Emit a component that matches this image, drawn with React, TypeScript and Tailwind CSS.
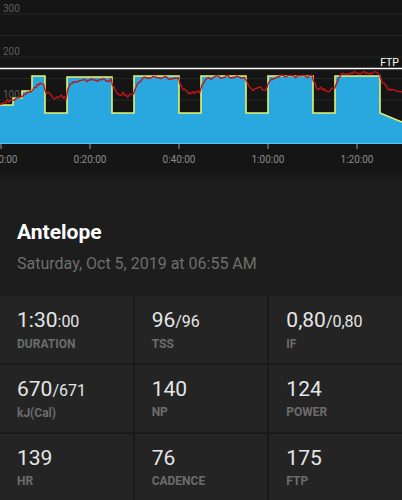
import React from 'react'

// workout steps in chart pixel space: [x0, x1, y0, y1]
const steps: [number, number, number, number][] = [
  [0, 13, 105, 105],
  [13, 22, 98, 98],
  [22, 32, 91, 91],
  [32, 45, 76, 76],
  [45, 67, 113, 113],
  [67, 112, 77, 77],
  [112, 134, 113, 113],
  [134, 179, 76, 76],
  [179, 201, 113, 113],
  [201, 246, 76, 76],
  [246, 268, 113, 113],
  [268, 313, 76, 76],
  [313, 335, 113, 113],
  [335, 380, 76, 76],
  [380, 402, 113, 122],
]

// where the rider actually sat (roughly) in each step
const redTargets = [101, 97, 92, 84, 97, 80, 95, 78, 93, 77, 89, 76, 90, 73, 90]

const BOTTOM = 143.5

const hash = (n: number) => {
  const s = Math.sin(n * 127.1 + 311.7) * 43758.5453
  return s - Math.floor(s) - 0.5
}

function buildWorkout() {
  const pts: string[] = []
  steps.forEach(([x0, x1, y0, y1]) => {
    pts.push(`${x0},${y0}`)
    pts.push(`${x1},${y1}`)
  })
  return pts.join(' ')
}

function buildPower() {
  const pts: string[] = []
  let r = 104
  for (let x = 0; x <= 402; x += 1.5) {
    const idx = steps.findIndex(([x0, x1]) => x >= x0 && x < x1)
    const i = idx === -1 ? steps.length - 1 : idx
    const target = redTargets[i]
    const low = steps[i][2] > 100
    r += 0.35 * (target - r)
    const y = r + hash(x) * (low ? 3.6 : 2.2) + Math.sin(x * 0.6) * 0.8
    pts.push(`${x},${y.toFixed(1)}`)
  }
  return pts.join(' ')
}

function WorkoutChart() {
  const outline = buildWorkout()
  const area = `0,${BOTTOM} ${outline} 402,${BOTTOM}`
  const power = buildPower()
  const ticks = [
    { x: 1, label: '0:00:00' },
    { x: 90, label: '0:20:00' },
    { x: 179, label: '0:40:00' },
    { x: 268, label: '1:00:00' },
    { x: 357, label: '1:20:00' },
  ]

  return (
    <svg width="402" height="176" viewBox="0 0 402 176" className="block">
      {[14, 35.5, 57, 78.5, 100, 121.5].map((y) => (
        <line key={y} x1="0" x2="402" y1={y} y2={y} stroke="#272727" strokeWidth="1" />
      ))}
      <polygon points={area} fill="#29a8df" />
      <line x1="0" x2="402" y1={BOTTOM} y2={BOTTOM} stroke="#5ec4ef" strokeWidth="1" />
      <polyline points={outline} fill="none" stroke="#e3f36c" strokeWidth="1.6" strokeLinejoin="miter" />
      <polyline points={power} fill="none" stroke="#c0141b" strokeWidth="1.4" strokeLinejoin="round" />
      <line x1="0" x2="402" y1="68.5" y2="68.5" stroke="#ffffff" strokeWidth="1.6" />
      <text x="399" y="65.5" textAnchor="end" fill="#ffffff" fontSize="10.5" fontFamily="Roboto, sans-serif">
        FTP
      </text>
      {[
        { y: 11.5, t: '300' },
        { y: 54.5, t: '200' },
        { y: 97.5, t: '100' },
      ].map((l) => (
        <text key={l.t} x="3" y={l.y} fill="#5e5e5e" fontSize="10" fontFamily="Roboto, sans-serif">
          {l.t}
        </text>
      ))}
      {ticks.map((t) => (
        <g key={t.label}>
          <line x1={t.x} x2={t.x} y1="144" y2="149" stroke="#9a9a9a" strokeWidth="1" />
          <text x={t.x} y="163" textAnchor="middle" fill="#8a8a8a" fontSize="10" fontFamily="Roboto, sans-serif">
            {t.label}
          </text>
        </g>
      ))}
    </svg>
  )
}

interface Stat {
  value: string
  suffix?: string
  label: string
}

const stats: Stat[] = [
  { value: '1:30', suffix: ':00', label: 'DURATION' },
  { value: '96', suffix: '/96', label: 'TSS' },
  { value: '0,80', suffix: '/0,80', label: 'IF' },
  { value: '670', suffix: '/671', label: 'kJ(Cal)' },
  { value: '140', label: 'NP' },
  { value: '124', label: 'POWER' },
  { value: '139', label: 'HR' },
  { value: '76', label: 'CADENCE' },
  { value: '175', label: 'FTP' },
]

export default function App() {
  return (
    <div className="w-[402px] h-[500px] overflow-hidden bg-[#1d1d1d] font-['Roboto',sans-serif]">
      {/* Power chart */}
      <div className="h-[172px] bg-[#151515] overflow-hidden">
        <WorkoutChart />
      </div>
      <div className="h-[10px] bg-gradient-to-b from-[#161616] to-[#1d1d1d]" />

      {/* Title */}
      <div className="px-[17px] pt-[40px] pb-[24px]">
        <h1 className="text-[21px] leading-[21px] font-bold text-white">Antelope</h1>
        <p className="mt-[13px] text-[16px] leading-[16px] text-[#6e6e6e]">Saturday, Oct 5, 2019 at 06:55 AM</p>
      </div>

      {/* Stats grid */}
      <div className="grid grid-cols-3 gap-[2px] bg-[#1a1a1a]">
        {stats.map((s) => (
          <div key={s.label} className="h-[67px] bg-[#242424] pl-[17px] pt-[14px]">
            <div className="text-[21px] leading-[21px] text-[#e6e6e6]">
              {s.value}
              {s.suffix && <span className="text-[16px]">{s.suffix}</span>}
            </div>
            <div className="mt-[6px] text-[12px] leading-[12px] font-bold text-[#6c6c6c]">{s.label}</div>
          </div>
        ))}
      </div>
    </div>
  )
}
